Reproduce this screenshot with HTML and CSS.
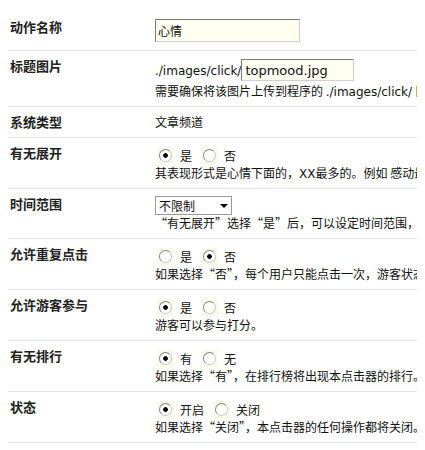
FILE: index.html
```html
<!DOCTYPE html>
<html lang="zh-CN">
<head>
  <meta charset="UTF-8" />
  <title>点击器设置</title>
  <link rel="stylesheet" href="styles.css">
</head>
<body>
  <table class="form-table">
    <tr>
      <td class="label">动作名称</td>
      <td class="field"><input class="text" type="text" value="心情" /></td>
    </tr>
    <tr>
      <td class="label">标题图片</td>
      <td class="field">
        <div class="line"><span class="en">./images/click/</span><input class="text short" type="text" value="topmood.jpg" /></div>
        <div class="desc">需要确保将该图片上传到程序的 <span class="en">./images/click/</span> 目录下。</div>
      </td>
    </tr>
    <tr>
      <td class="label">系统类型</td>
      <td class="field">文章频道</td>
    </tr>
    <tr>
      <td class="label">有无展开</td>
      <td class="field">
        <div class="opts">
          <label class="opt"><span class="radio on"></span>是</label>
          <label class="opt"><span class="radio"></span>否</label>
        </div>
        <div class="desc">其表现形式是心情下面的，<span class="en">XX</span>最多的。例如 感动最多的文章。</div>
      </td>
    </tr>
    <tr>
      <td class="label">时间范围</td>
      <td class="field">
        <span class="select"><select><option>不限制</option></select></span>
        <div class="desc">“有无展开”选择“是”后，可以设定时间范围，可以只统计一段时间。</div>
      </td>
    </tr>
    <tr>
      <td class="label">允许重复点击</td>
      <td class="field">
        <div class="opts">
          <label class="opt"><span class="radio"></span>是</label>
          <label class="opt"><span class="radio on"></span>否</label>
        </div>
        <div class="desc">如果选择“否”，每个用户只能点击一次，游客状态下不受限制。</div>
      </td>
    </tr>
    <tr>
      <td class="label">允许游客参与</td>
      <td class="field">
        <div class="opts">
          <label class="opt"><span class="radio on"></span>是</label>
          <label class="opt"><span class="radio"></span>否</label>
        </div>
        <div class="desc">游客可以参与打分。</div>
      </td>
    </tr>
    <tr>
      <td class="label">有无排行</td>
      <td class="field">
        <div class="opts">
          <label class="opt"><span class="radio on"></span>有</label>
          <label class="opt"><span class="radio"></span>无</label>
        </div>
        <div class="desc">如果选择“有”，在排行榜将出现本点击器的排行。</div>
      </td>
    </tr>
    <tr>
      <td class="label">状态</td>
      <td class="field">
        <div class="opts">
          <label class="opt"><span class="radio on"></span>开启</label>
          <label class="opt"><span class="radio"></span>关闭</label>
        </div>
        <div class="desc">如果选择“关闭”，本点击器的任何操作都将关闭。</div>
      </td>
    </tr>
  </table>
</body>
</html>
```
FILE: styles.css
```css
* {
  box-sizing: border-box;
}

body {
  margin: 8px;
  font-family: "Noto Sans CJK SC", "DejaVu Sans", sans-serif;
  font-size: 12px;
  color: #111;
  background: #fff;
  overflow: hidden;
}

.en {
  font-family: "DejaVu Sans", sans-serif;
  line-height: 12px;
}

.form-table {
  border-collapse: collapse;
  margin-top: 4px;
  width: 760px;
}

.form-table td {
  padding: 7px 2px 8px;
  border-bottom: 1px solid #e6e6e6;
  vertical-align: top;
  line-height: 15px;
  white-space: nowrap;
  text-align: left;
}

.form-table td.label {
  width: 145px;
  font-size: 13px;
  font-weight: bold;
  color: #222;
}

input.text {
  display: block;
  width: 145px;
  height: 23px;
  margin: 0;
  padding: 0 2px;
  font: inherit;
  color: #111;
  background: #fffff2;
  border: 1px solid;
  border-color: #7b7b7b #d0d0d0 #d0d0d0 #7b7b7b;
  outline: none;
}

input.text.short {
  width: 113px;
  height: 22px;
  padding: 0 3px;
  font-family: "DejaVu Sans", sans-serif;
  font-size: 13px;
}

.line {
  display: flex;
  align-items: baseline;
  height: 25px;
  padding-top: 1px;
}

.desc {
  height: 15px;
}

.opts {
  display: flex;
  align-items: center;
  height: 20px;
}

.opt {
  display: inline-flex;
  align-items: center;
  margin-right: 7px;
}

.radio {
  display: inline-flex;
  align-items: center;
  justify-content: center;
  width: 17px;
  height: 17px;
  margin: 0 6px 0 2px;
  background: #fafaea;
}

.radio::before {
  content: "";
  width: 11px;
  height: 11px;
  border-radius: 50%;
  border: 1px solid;
  border-color: #858585 #c6c6c6 #c6c6c6 #858585;
  background: #fff;
}

.radio.on::before {
  background: radial-gradient(circle, #000 0 2px, #fff 2.6px);
}

.select {
  display: flex;
  align-items: center;
  width: 77px;
  height: 19px;
  border: 1px solid #9a9a9a;
  background: #fff;
}

.select select {
  flex: 1;
  min-width: 0;
  height: 17px;
  padding: 0 0 0 3px;
  border: 0;
  background: none;
  font: inherit;
  line-height: 15px;
  color: #111;
  appearance: none;
  outline: none;
}

.select::after {
  content: "";
  margin-right: 3px;
  border-left: 4px solid transparent;
  border-right: 4px solid transparent;
  border-top: 4px solid #000;
}
```
